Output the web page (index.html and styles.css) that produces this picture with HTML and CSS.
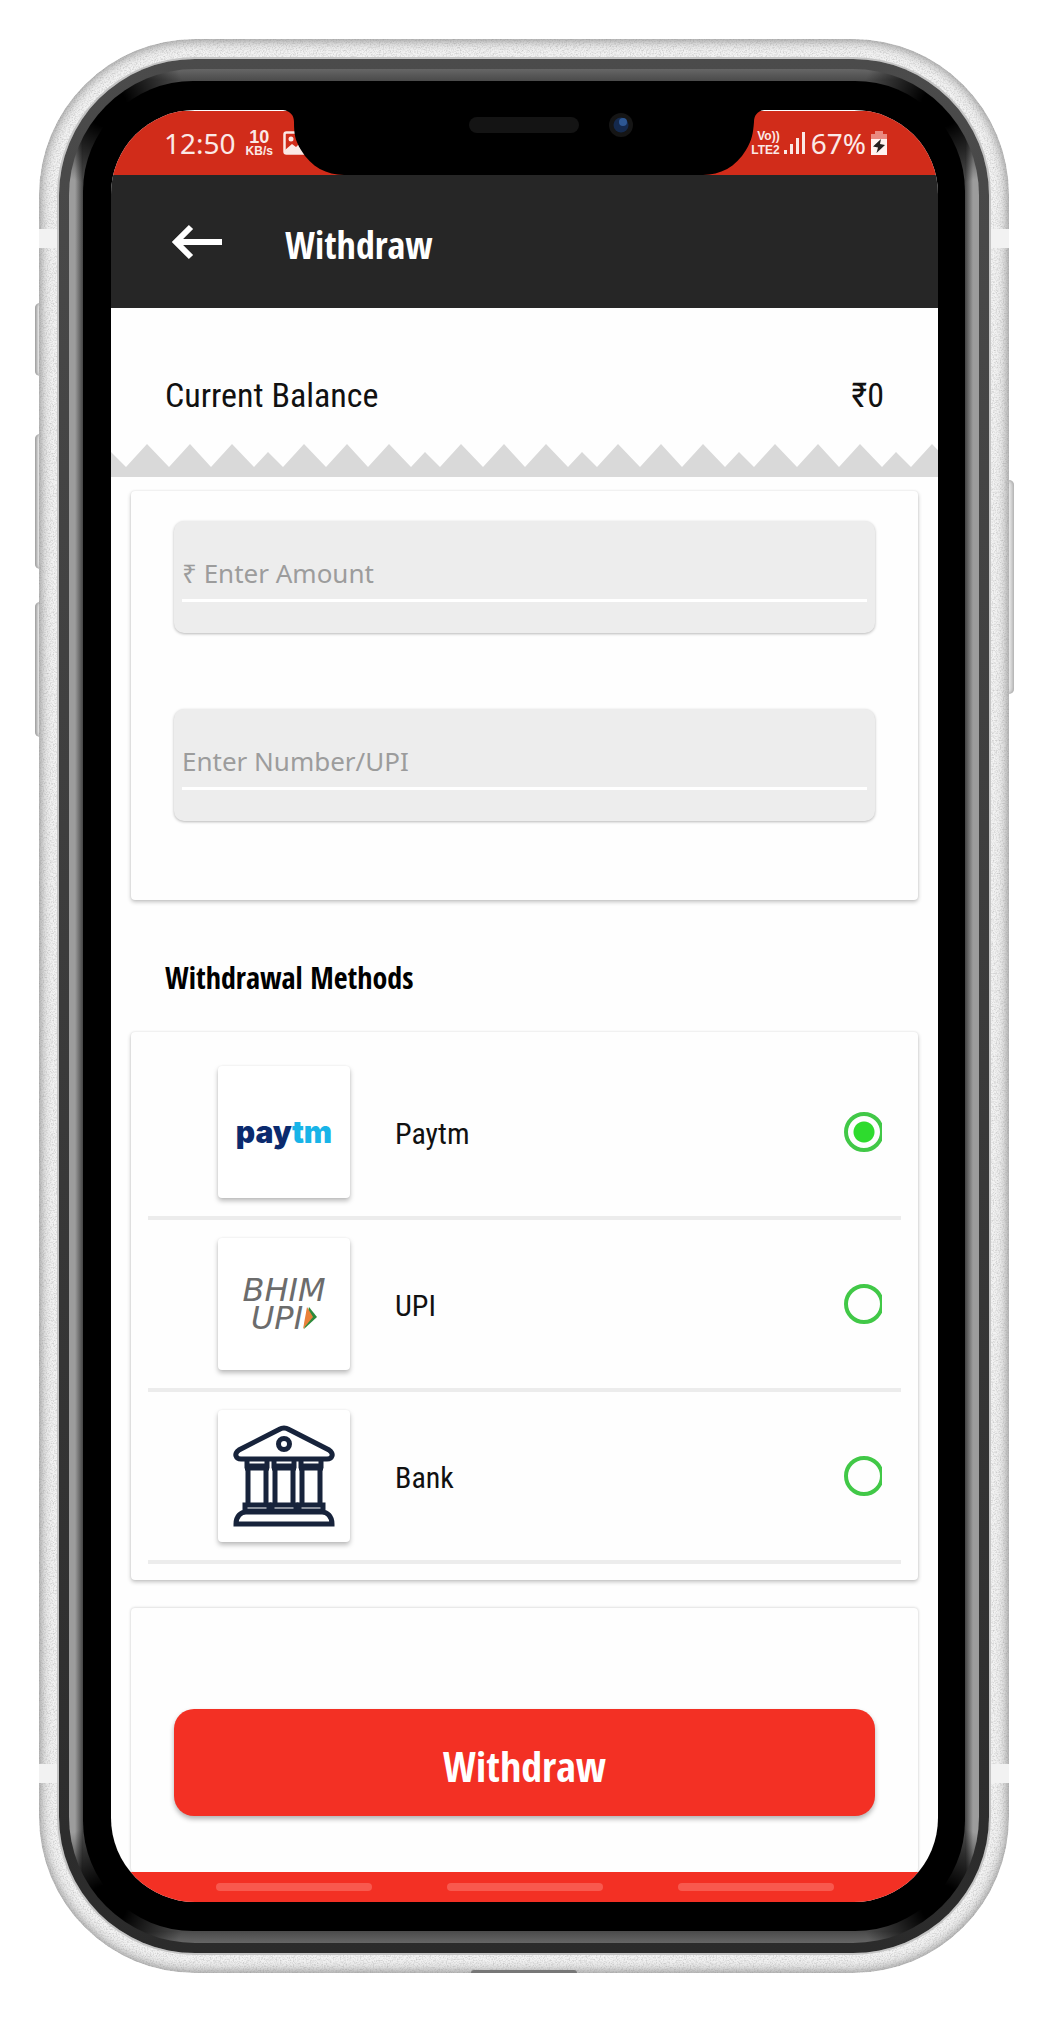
FILE: index.html
```html
<!DOCTYPE html>
<html lang="en">
<head>
<meta charset="utf-8">
<meta name="viewport" content="width=device-width, initial-scale=1">
<title>Withdraw</title>
<link rel="stylesheet" href="styles.css">
</head>
<body>
<div class="phone">
  <span class="side-key side-key--mute"></span>
  <span class="side-key side-key--up"></span>
  <span class="side-key side-key--down"></span>
  <span class="side-key side-key--power"></span>
  <div class="metal">
    <svg class="grain" aria-hidden="true">
      <filter id="grain"><feTurbulence type="fractalNoise" baseFrequency="0.7" numOctaves="2"/><feColorMatrix values="0 0 0 0 0.4  0 0 0 0 0.4  0 0 0 0 0.4  1.2 0 0 0 -0.5"/></filter>
      <rect width="100%" height="100%" filter="url(#grain)"/>
    </svg>
    <span class="antenna antenna--top"></span>
    <span class="antenna antenna--bottom"></span>
    <span class="port"></span>
  </div>
  <div class="rim"><div class="glow"><div class="bezel">
    <div class="screen">
      <div class="status">
        <div class="status-group">
          <span class="clock">12:50</span>
          <span class="net"><b>10</b><small>KB/s</small></span>
          <svg class="photo" width="24" height="24" viewBox="0 0 24 24" aria-hidden="true"><rect x="1.500" y="1.500" width="21" height="21" rx="2" fill="none" stroke="#fbe9e6" stroke-width="2.500"/><circle cx="8" cy="8" r="2.500" fill="#fbe9e6"/><path d="M2 19l7-6 4 3 5-5 4 4v7H2z" fill="#fbe9e6"/></svg>
        </div>
        <div class="status-group">
          <span class="lte"><small>Vo))</small><small>LTE2</small></span>
          <svg width="23" height="24" viewBox="0 0 23 24" aria-hidden="true" fill="#fbe9e6"><rect x="0" y="19" width="3" height="4"/><rect x="6" y="13" width="3" height="10"/><rect x="12" y="7" width="3" height="16"/><rect x="18" y="1" width="3" height="22"/></svg>
          <span class="percent">67%</span>
          <svg width="18" height="26" viewBox="0 0 18 26" aria-hidden="true"><path d="M5 1h8v3h4v6H1V4h4z" fill="#ea8a80"/><rect x="1" y="9" width="16" height="16" fill="#fff3f0"/><path d="M11 9L3 16.500l5 1L6.500 23 15 15l-5-1z" fill="#26201f"/></svg>
        </div>
      </div>
      <header class="bar">
        <button class="back" type="button" aria-label="Back"><svg width="52" height="36" viewBox="0 0 52 36" fill="none" stroke="#fff" stroke-width="6"><path d="M51 18H5M20 3L5 18l15 15"/></svg></button>
        <h1>Withdraw</h1>
      </header>
      <main>
        <section class="balance"><span>Current Balance</span><span>₹0</span></section>
        <svg class="zigzag" aria-hidden="true">
          <pattern id="zig" x="36" y="0" width="157" height="33" patternUnits="userSpaceOnUse"><path d="M0 0L22 23 43 0 64 23 85 0 107 23 121 8 136 23 157 0V33H0z" fill="#d9d9d9"/></pattern>
          <rect width="100%" height="33" fill="url(#zig)"/>
        </svg>
        <form>
          <div class="card fields">
            <div class="field"><input type="text" aria-label="Amount" placeholder="₹ Enter Amount"></div>
            <div class="field"><input type="text" aria-label="Number or UPI" placeholder="Enter Number/UPI"></div>
          </div>
          <h2>Withdrawal Methods</h2>
          <div class="card methods">
            <label class="method">
              <span class="tile paytm"><span>pay</span><span class="cyan">tm</span></span>
              <span class="name">Paytm</span>
              <span class="radio"><input type="radio" name="method" checked></span>
            </label>
            <label class="method">
              <span class="tile bhim"><span>BHIM</span><span class="upi">UPI<svg width="14" height="22" viewBox="0 0 14 22" aria-hidden="true"><path d="M6 0l8 10L1 22z" fill="#2c8a3c"/><path d="M4 0l6 10L0 22z" fill="#e9813a"/></svg></span></span>
              <span class="name">UPI</span>
              <span class="radio"><input type="radio" name="method"></span>
            </label>
            <label class="method">
              <span class="tile">
                <svg width="102" height="102" viewBox="0 0 102 102" fill="none" stroke="#17233b" stroke-width="5" aria-hidden="true">
                  <path d="M46 4.500q5-3 10 0L96 25q4 3 3 6-1 3-5 3H8q-4 0-5-3-1-3 3-6z"/>
                  <circle cx="51" cy="19" r="5.500"/>
                  <g id="column"><path d="M14 36v5h20v-5M12 85v-5h24v5M15 43v36M33 43v36M12 43h24M12 80h24M12 86h24"/></g>
                  <use href="#column" x="27"/><use href="#column" x="54"/>
                  <path d="M3 99c0-8 5-12 10-12h76c5 0 10 4 10 12z"/>
                </svg>
              </span>
              <span class="name">Bank</span>
              <span class="radio"><input type="radio" name="method"></span>
            </label>
          </div>
          <div class="card action"><button class="submit" type="submit">Withdraw</button></div>
        </form>
      </main>
      <div class="nav"><span></span><span></span><span></span></div>
      <svg class="notch" width="481" height="66" viewBox="0 0 481 66" aria-hidden="true">
        <path d="M0 0H481C474 1 471 6 471 12C470 24 469 30 463 40C453 57 437 65 420 65H61C44 65 28 57 18 40C12 30 11 24 11 12C11 6 8 1 0 0z"/>
        <rect x="186" y="7" width="110" height="16" rx="8" fill="#141414"/>
        <circle cx="338" cy="15" r="12" fill="#151515"/><circle cx="338" cy="15" r="7.500" fill="#14294d"/><circle cx="340" cy="12" r="4" fill="#2d5793"/>
      </svg>
    </div>
  </div></div></div>
</div>
</body>
</html>
```
FILE: styles.css
```css
* { box-sizing: border-box; }
body { margin: 0; padding: 39px 39px 52px; background: #fff; font-family: "Roboto Condensed", Roboto, sans-serif; color: #111; }
h1, h2 { margin: 0; font-family: "Open Sans Condensed", "Open Sans", sans-serif; font-weight: 700; }

/* Handset */
.phone { position: relative; padding: 20px; border-radius: 156px; }
.metal { position: absolute; inset: 0; overflow: hidden; border-radius: 156px; background: #f2f2f2; }
.metal::after { content: ""; position: absolute; inset: 0; border-radius: 156px; box-shadow: inset 0 0 12px 1px #858585; }
.grain { position: absolute; width: 100%; height: 100%; }
.antenna { position: absolute; left: 0; right: 0; height: 19px; background: #f2f2f2; z-index: 1; }
.antenna--top { top: 190px; }
.antenna--bottom { bottom: 190px; }
.port { position: absolute; bottom: 0; left: 50%; width: 106px; height: 3px; margin-left: -53px; border-radius: 6px 6px 0 0; background: #777; z-index: 1; }
.side-key { position: absolute; width: 10px; border-radius: 5px; background: linear-gradient(90deg, #a5a5a5, #eee 40%, #ccc); box-shadow: inset 0 0 4px #999; }
.side-key--mute { left: -4px; top: 264px; height: 73px; }
.side-key--up { left: -4px; top: 395px; height: 135px; }
.side-key--down { left: -4px; top: 563px; height: 135px; }
.side-key--power { right: -5px; top: 441px; height: 214px; }
.rim { position: relative; z-index: 2; padding: 10px; border-radius: 136px; background: linear-gradient(#4b4b4b, #2b2b2b); box-shadow: 0 0 0 2px #c4c4c4; }
.glow {
  padding: 12px 14px;
  border-radius: 126px;
  background:
    radial-gradient(circle at 38px 38px, #000 20px, transparent 80px) no-repeat 0 0 / 50% 50%,
    radial-gradient(circle at calc(100% - 38px) 38px, #000 20px, transparent 80px) no-repeat 100% 0 / 50% 50%,
    radial-gradient(circle at 38px calc(100% - 38px), #000 20px, transparent 80px) no-repeat 0 100% / 50% 50%,
    radial-gradient(circle at calc(100% - 38px) calc(100% - 38px), #000 20px, transparent 80px) no-repeat 100% 100% / 50% 50%,
    linear-gradient(90deg, #9c9c9c 6px, #444 14px, transparent 14px) no-repeat 0 0 / 50% 100%,
    linear-gradient(270deg, #9c9c9c 6px, #444 14px, transparent 14px) no-repeat 100% 0 / 50% 100%,
    linear-gradient(#666, #4a4a4a 12px, transparent 12px) no-repeat 0 0 / 100% 50%,
    linear-gradient(0deg, #666, #4a4a4a 12px, transparent 12px) no-repeat 0 100% / 100% 50%,
    #4c4c4c;
}
.bezel { padding: 29px 27px 29px 28px; border-radius: 110px; background: #000; }
.screen { position: relative; overflow: hidden; padding-top: 1px; border-radius: 84px; background: #fefefe; }
.notch { position: absolute; top: 0; left: 50%; margin-left: -242px; }

/* Status bar */
.status { display: flex; justify-content: space-between; align-items: center; height: 64px; padding: 0 50px 0 53px; background: #d12c1a; color: #fbe9e6; font-family: "Noto Sans", sans-serif; }
.status-group { display: flex; align-items: center; gap: 4px; }
.clock, .percent { font-size: 28px; line-height: 40px; }
.net, .lte { display: flex; flex-direction: column; align-items: center; }
.net { margin: 0 6px; font-family: "Liberation Sans", sans-serif; font-weight: 700; }
.net b { font-size: 18px; line-height: 16px; }
.net small { font-size: 12px; line-height: 12px; }
.lte { align-items: flex-end; font-family: "Liberation Sans", sans-serif; font-weight: 700; }
.lte small { font-size: 12px; line-height: 14px; }

/* Title bar */
.bar { display: flex; align-items: center; gap: 62px; height: 133px; padding: 0 60px; background: #262626; color: #fff; }
.back { display: flex; padding: 0; border: 0; background: none; }
h1 { padding-top: 4px; font-size: 38px; line-height: 56px; }

.balance { display: flex; justify-content: space-between; padding: 66px 54px 28px; font-size: 34px; line-height: 42px; }
.zigzag { display: block; width: 100%; height: 33px; }

/* Cards */
.card { margin: 0 20px; border-radius: 4px; background: #fefefe; box-shadow: 0 2px 4px rgba(0, 0, 0, .24), 0 0 2px rgba(0, 0, 0, .1); }
.fields { display: flex; flex-direction: column; gap: 76px; margin-top: 14px; padding: 30px 43px 79px; }
.field { padding: 30px 8px 31px; border-radius: 10px; background: #ededed; box-shadow: 0 1px 3px rgba(0, 0, 0, .28); }
.field input { display: block; width: 100%; height: 51px; padding: 0 0 4px; border: 0; border-bottom: 3px solid #fff; outline: 0; background: none; font-family: "Noto Sans", sans-serif; font-size: 26px; color: #222; }
.field input::placeholder { color: #9c9c9c; opacity: 1; }
h2 { margin: 56px 54px 32px; font-size: 30px; line-height: 44px; color: #000; }

.methods { padding: 16px 17px; }
.method { display: flex; align-items: center; padding: 18px 19px 18px 70px; border-bottom: 4px solid #ececec; }
.tile { display: flex; align-items: center; justify-content: center; width: 132px; height: 132px; border-radius: 4px; background: #fff; box-shadow: 0 3px 5px rgba(0, 0, 0, .26), 0 0 2px rgba(0, 0, 0, .08); }
.name { flex: 1; margin-left: 45px; padding-top: 4px; font-size: 30px; line-height: 40px; }
.radio { display: flex; width: 38px; overflow: hidden; }
.radio input { appearance: none; flex: none; width: 40px; height: 40px; margin: 0; border: 4px solid #41c847; border-radius: 50%; }
.radio input:checked { background: radial-gradient(circle, #2edb2e 10px, transparent 11px); }
.paytm { font: 900 30px/40px Inter, sans-serif; color: #0a2a6e; }
.cyan { color: #18b4e8; }
.bhim { flex-direction: column; color: #6c6c6c; font: italic 32px/28px "DejaVu Sans", sans-serif; }
.upi { display: flex; align-items: center; }

.action { margin-top: 28px; padding: 101px 43px 56px; box-shadow: 0 0 3px rgba(0, 0, 0, .24); }
.submit { display: block; width: 100%; height: 107px; padding: 6px 0 0; border: 0; border-radius: 20px; background: #f33024; color: #fff; font: 700 42px/60px "Open Sans Condensed", "Open Sans", sans-serif; box-shadow: 0 3px 5px rgba(0, 0, 0, .3); }
.nav { display: flex; justify-content: center; align-items: center; gap: 75px; height: 30px; background: #f33024; }
.nav span { width: 156px; height: 8px; border-radius: 4px; background: #f8594e; }
```
